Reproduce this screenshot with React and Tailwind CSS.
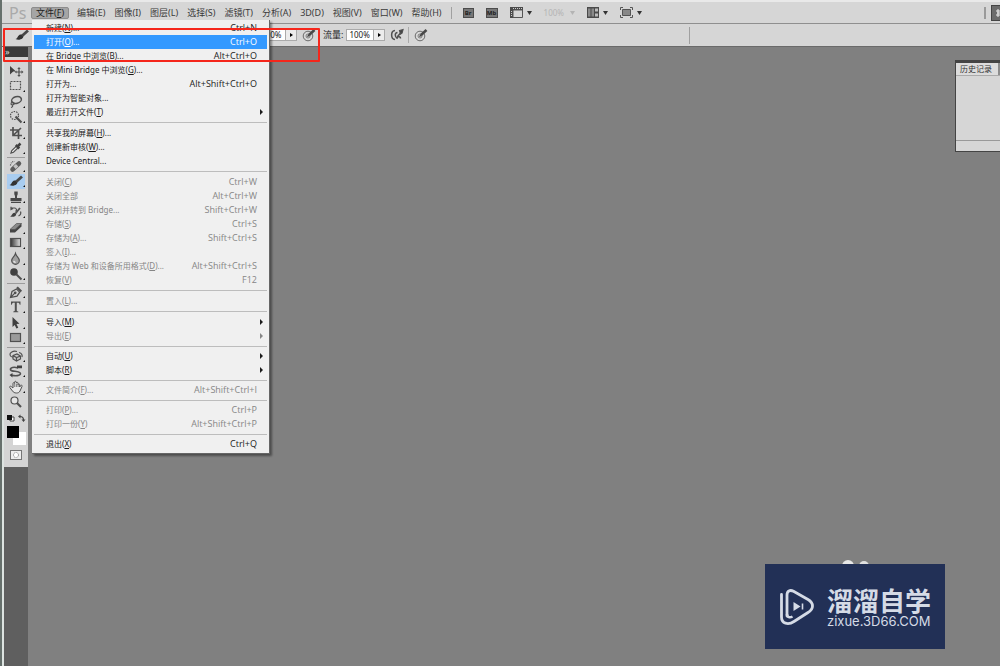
import { createElement } from "react";

const menus = [
  ["编辑", "E"],
  ["图像", "I"],
  ["图层", "L"],
  ["选择", "S"],
  ["滤镜", "T"],
  ["分析", "A"],
  ["3D", "D"],
  ["视图", "V"],
  ["窗口", "W"],
  ["帮助", "H"],
];

// One inner array per block between separators
const fileMenu = [
  [
    { label: "新建", mnemonic: "N", dots: true, keys: "Ctrl+N" },
    { label: "打开", mnemonic: "O", dots: true, keys: "Ctrl+O", active: true },
    { label: "在 Bridge 中浏览", mnemonic: "B", dots: true, keys: "Alt+Ctrl+O" },
    { label: "在 Mini Bridge 中浏览", mnemonic: "G", dots: true },
    { label: "打开为", dots: true, keys: "Alt+Shift+Ctrl+O" },
    { label: "打开为智能对象", dots: true },
    { label: "最近打开文件", mnemonic: "T", submenu: true },
  ],
  [
    { label: "共享我的屏幕", mnemonic: "H", dots: true },
    { label: "创建新审核", mnemonic: "W", dots: true },
    { label: "Device Central", dots: true },
  ],
  [
    { label: "关闭", mnemonic: "C", keys: "Ctrl+W", disabled: true },
    { label: "关闭全部", keys: "Alt+Ctrl+W", disabled: true },
    { label: "关闭并转到 Bridge", dots: true, keys: "Shift+Ctrl+W", disabled: true },
    { label: "存储", mnemonic: "S", keys: "Ctrl+S", disabled: true },
    { label: "存储为", mnemonic: "A", dots: true, keys: "Shift+Ctrl+S", disabled: true },
    { label: "签入", mnemonic: "I", dots: true, disabled: true },
    { label: "存储为 Web 和设备所用格式", mnemonic: "D", dots: true, keys: "Alt+Shift+Ctrl+S", disabled: true },
    { label: "恢复", mnemonic: "V", keys: "F12", disabled: true },
  ],
  [{ label: "置入", mnemonic: "L", dots: true, disabled: true }],
  [
    { label: "导入", mnemonic: "M", submenu: true },
    { label: "导出", mnemonic: "E", submenu: true, disabled: true },
  ],
  [
    { label: "自动", mnemonic: "U", submenu: true },
    { label: "脚本", mnemonic: "R", submenu: true },
  ],
  [{ label: "文件简介", mnemonic: "F", dots: true, keys: "Alt+Shift+Ctrl+I", disabled: true }],
  [
    { label: "打印", mnemonic: "P", dots: true, keys: "Ctrl+P", disabled: true },
    { label: "打印一份", mnemonic: "Y", keys: "Alt+Shift+Ctrl+P", disabled: true },
  ],
  [{ label: "退出", mnemonic: "X", keys: "Ctrl+Q" }],
];

function Svg({ children }) {
  return (
    <svg viewBox="0 0 16 16" className="w-4 h-4" fill="none" stroke="#505050" strokeWidth="1.2" aria-hidden="true">
      {children}
    </svg>
  );
}

const MoveIcon = () => (
  <Svg>
    <path d="M2 3l6 5.500H5.200L2 11.500z" fill="#404040" stroke="none" />
    <path d="M11 6v6M8 9h6" />
    <path d="M11 4l1.700 2H9.300zM11 14l1.700-2H9.300zM15.500 9l-2-1.700v3.400zM6.800 9l1.700-1.500v3z" fill="#505050" stroke="none" />
  </Svg>
);
const MarqueeIcon = () => (
  <Svg>
    <rect x="2.500" y="3.500" width="10" height="8" strokeDasharray="2 1" />
  </Svg>
);
const LassoIcon = () => (
  <Svg>
    <ellipse cx="8.500" cy="6" rx="5" ry="3.300" transform="rotate(-15 8.500 6)" strokeWidth="1.500" />
    <path d="M4.500 8c-2.500 1-1.500 3.500.5 2.800S6 8 4.500 8M4.500 11c.5 1 0 2-1.500 2.500" />
  </Svg>
);
const QuickSelectIcon = () => (
  <Svg>
    <circle cx="6.500" cy="6.500" r="4" strokeDasharray="1.500 1" />
    <path d="M7.500 7.500l6 6" strokeWidth="2.200" />
  </Svg>
);
const CropIcon = () => (
  <Svg>
    <path d="M5 2v8.500h9M2 5h8.500v9M5 10.500L13 3" strokeWidth="1.700" />
  </Svg>
);
const EyedropperIcon = () => (
  <Svg>
    <path d="M3 13l.8-2.500L8.500 6l1.700 1.700-4.700 4.600z" fill="#eee" />
    <path d="M7.800 5l3.500 3.500M9.500 6.500L12.500 3.500" strokeWidth="2.500" stroke="#404040" />
  </Svg>
);
const HealIcon = () => (
  <Svg>
    <path d="M4.500 11.500l6.500-6" strokeWidth="4.500" strokeLinecap="round" stroke="#5c5c5c" />
    <path d="M6.500 9.600l2.600-2.400" strokeWidth="3.500" stroke="#c4c4c4" />
    <path d="M2.500 7.500c0-3 2-4 4-4" strokeDasharray="1 1" />
  </Svg>
);
const BrushIcon = () => (
  <Svg>
    <path d="M1.500 12c2.500-.2 2-4 5-4.500 2.500-.2 3.700 2.200 2 3.700-2 1.800-5 1.800-7 .8z" fill="#333" stroke="none" />
    <path d="M8.200 8.800L14 3.500" strokeWidth="2.800" stroke="#484848" />
  </Svg>
);
const StampIcon = () => (
  <Svg>
    <path d="M6.300 2.500h3.400v2.800L9 7v2h4.500v3h-11V9H7V7l-.7-1.700zM3 12.800h10V14H3z" fill="#484848" stroke="none" />
  </Svg>
);
const HistoryBrushIcon = () => (
  <Svg>
    <path d="M3 4h4.500M3 2.800v2.700l2-1M6.500 4c2.500.3 2.500 2.500 1 3.500" />
    <path d="M2 12.500c2-.3 2-3.500 4.500-3.700 1.800.2 2.300 2 .8 3.200-1.500 1-3.500 1.100-5.300.5z" fill="#404040" stroke="none" />
    <path d="M7.500 9.500L12 4" strokeWidth="1.800" />
    <path d="M10.500 12c2-1 2.700-2.700 2-4.500" />
  </Svg>
);
const EraserIcon = () => (
  <Svg>
    <path d="M2 9.500L8.500 3.500h5L7 9.500z" fill="#8a8a8a" stroke="#5c5c5c" strokeWidth=".8" />
    <path d="M2 9.500h5v3H2zM7 9.500l6.500-6v3L7 12.500z" fill="#444" stroke="none" />
  </Svg>
);
const GradientIcon = () => (
  <Svg>
    <defs>
      <linearGradient id="toolGradient">
        <stop offset="0" stopColor="#333" />
        <stop offset="1" stopColor="#e4e4e4" />
      </linearGradient>
    </defs>
    <rect x="2.500" y="3.500" width="10" height="8" fill="url(#toolGradient)" />
  </Svg>
);
const BlurIcon = () => (
  <Svg>
    <path d="M7.500 2.500c.8 3 3.800 4.300 3.800 7a3.800 3.800 0 0 1-7.600 0c0-2.700 3-4 3.800-7z" fill="#a0a0a0" />
    <path d="M5.700 9.800c.2 1 .9 1.500 1.900 1.500" stroke="#f2f2f2" />
  </Svg>
);
const DodgeIcon = () => (
  <Svg>
    <circle cx="6" cy="6" r="3.800" fill="#404040" stroke="none" />
    <path d="M8.500 8.500l5 5" strokeWidth="2" />
  </Svg>
);
const PenIcon = () => (
  <Svg>
    <path d="M2.500 13.500l1.500-6 4.500-2.500 3.200 3.200-2.700 4zM3 13l3.800-3.800" />
    <path d="M9 3.200l4.300 4.300" strokeWidth="2.200" />
    <circle cx="7.200" cy="8.800" r=".8" fill="#484848" />
  </Svg>
);
const TypeIcon = () => (
  <Svg>
    <path d="M3 2.500h9.500v3.200h-.8c-.3-1.500-.8-2-2-2H8.800v7.600c0 .9.3 1.100 1.500 1.200v.8h-5v-.8c1.200-.1 1.500-.3 1.500-1.200V3.700h-.9c-1.200 0-1.800.5-2.100 2H3z" fill="#505050" stroke="none" />
  </Svg>
);
const PathSelectIcon = () => (
  <Svg>
    <path d="M4.500 2l7 6.800-3 .3 1.800 3.600-1.900.9-1.700-3.700-2.200 2z" fill="#404040" stroke="none" />
  </Svg>
);
const ShapeIcon = () => (
  <Svg>
    <rect x="2.500" y="3.500" width="10" height="8" fill="#9a9a9a" />
  </Svg>
);
const RotateObjectIcon = () => (
  <Svg>
    <path d="M5 7.500l4-1.500 3.500 2v3l-4 2L5 11zM5 7.500l3.500 2 4-1.500M8.500 9.500V13" fill="#c4c4c4" />
    <path d="M9 3.500C5 2.500 1.500 4.500 2 7c.3 1.500 1.500 2 3 2.200M11 4.500c2.500.7 3.500 2.500 3 4.500" />
  </Svg>
);
const RotateCameraIcon = () => (
  <Svg>
    <path d="M10 5C6 3.500 2 4.500 2.500 6.700s7.500 1 9.500 3-2.500 4-8 2.600" strokeWidth="1.600" />
    <path d="M9 2.500h5v2.700H9zM4.500 10v4.500L1.500 12z" fill="#404040" stroke="none" />
  </Svg>
);
const HandIcon = () => (
  <Svg>
    <path d="M5 9V4.500c0-1.200 1.600-1.200 1.600 0V3.200c0-1.200 1.700-1.200 1.700 0v1c0-1.200 1.700-1.200 1.700 0v1.500c0-1.200 1.700-1.200 1.700 0V8l1-1.500c.8-.8 1.800 0 1.300 1l-2 4.500c-.7 1.500-2 2-3.500 2-2 0-3-.7-4-2L1.800 8.500C1.200 7.200 2.600 6.800 3.300 7.600z" fill="#e8e8e8" strokeWidth="1" />
    <path d="M6.700 5v3M8.400 5v3M10.100 5.500V8" strokeWidth=".7" />
  </Svg>
);
const ZoomIcon = () => (
  <Svg>
    <circle cx="6.500" cy="6.500" r="3.500" fill="#e6e6e6" />
    <path d="M9 9l4 4" strokeWidth="2.200" />
  </Svg>
);
const AirbrushIcon = () => (
  <Svg>
    <path d="M6 3.500C1.500 4 1.500 12 6 12.500M8.500 5.500c-3 .3-3 4.500 0 6" strokeWidth="1.500" />
    <path d="M8 11.500l1-2.500 4-4.500M9 9.500c1.500 0 2.500.5 2.500 2" strokeWidth="1.500" />
    <path d="M10.500 3.500L14 2.500l-1 3.500-1.500 1z" fill="#404040" />
  </Svg>
);
const TabletIcon = () => (
  <Svg>
    <circle cx="7" cy="9" r="4.800" strokeWidth="1" stroke="#6a6a6a" />
    <circle cx="7" cy="9" r="2" strokeWidth=".8" stroke="#6a6a6a" />
    <path d="M6 10l1.200-2.800L9 9z" fill="#404040" stroke="none" />
    <path d="M8 8l5.500-5" strokeWidth="2.600" stroke="#484848" />
  </Svg>
);

const toolGroups = [
  {
    height: "h-[93px]",
    tools: [
      ["移动", MoveIcon],
      ["选框", MarqueeIcon],
      ["套索", LassoIcon],
      ["快速选择", QuickSelectIcon],
      ["裁剪", CropIcon],
      ["吸管", EyedropperIcon],
    ],
  },
  {
    height: "h-[125px]",
    tools: [
      ["修复画笔", HealIcon],
      ["画笔", BrushIcon],
      ["图章", StampIcon],
      ["历史记录画笔", HistoryBrushIcon],
      ["橡皮擦", EraserIcon],
      ["渐变", GradientIcon],
      ["模糊", BlurIcon],
      ["减淡", DodgeIcon],
    ],
  },
  {
    height: "h-[63px]",
    tools: [
      ["钢笔", PenIcon],
      ["文字", TypeIcon],
      ["路径选择", PathSelectIcon],
      ["矩形", ShapeIcon],
    ],
  },
  {
    height: "h-[63px]",
    tools: [
      ["3D 对象旋转", RotateObjectIcon],
      ["3D 相机旋转", RotateCameraIcon],
      ["抓手", HandIcon],
      ["缩放", ZoomIcon],
    ],
  },
];

function Caret({ className = "fill-[#333]" }) {
  return (
    <svg viewBox="0 0 5 4" className={`w-[5px] h-1 ${className}`} aria-hidden="true">
      <path d="M0 0h5L2.500 4z" />
    </svg>
  );
}

function MenuBar() {
  return (
    <header className="flex items-center h-6 pl-[2px] bg-[#d6d6d6] border-t-2 border-b border-t-[#e9e9e9] border-b-[#8f8f8f]">
      <span className="w-[27px] pl-[5px] text-[16px] leading-5 text-[#a9a9a9]">Ps</span>
      <nav className="flex items-center gap-[9px] text-[9px] leading-3 text-[#3a3a3a]">
        <button className="h-3 px-1 -mr-px rounded-[2px] bg-[#a5a5a5] border border-[#8c8c8c] leading-[10px] text-[#222]">
          文件(<u>F</u>)
        </button>
        {menus.map(([label, key]) => (
          <button key={key} className="whitespace-nowrap">
            {label}({key})
          </button>
        ))}
      </nav>
      <div className="flex items-center ml-[9px] h-3 pl-[11px] border-l border-[#a0a0a0]">
        <button className="w-[11px] h-[10px] bg-[#777] border border-[#4c4c4c] text-[6px] leading-[8px] font-bold text-[#222]">Br</button>
        <button className="w-3 h-[10px] ml-3 bg-[#777] border border-[#4c4c4c] text-[6px] leading-[8px] font-bold text-[#222]">Mb</button>
        <button className="flex items-center gap-1 ml-3" aria-label="查看额外内容">
          <svg viewBox="0 0 13 11" className="w-[13px] h-[11px]" aria-hidden="true">
            <path d="M0 0h13v3H3v8H0z" fill="#4a4a4a" />
            <path d="M3 3h9.500v7.500H3z" fill="#d6d6d6" stroke="#555" />
            <path d="M3 1.500h9M1.500 4v6" stroke="#ccc" strokeDasharray="1 1" />
          </svg>
          <Caret />
        </button>
        <button className="flex items-center gap-[6px] ml-3 text-[8px] text-[#b4b4b4]">
          100%
          <Caret className="fill-[#b4b4b4]" />
        </button>
        <button className="flex items-center gap-1 ml-3" aria-label="排列文档">
          <svg viewBox="0 0 12 11" className="w-3 h-[11px]" aria-hidden="true">
            <path d="M0 0h12v11H0z" fill="#4a4a4a" />
            <path d="M8 1.500h3v3H8zM8 6.500h3v3H8z" fill="#bdbdbd" />
            <path d="M1 1.500h2.500v8H1zM4.500 1.500h2.500v8H4.500z" fill="#8a8a8a" />
          </svg>
          <Caret />
        </button>
        <button className="flex items-center gap-1 ml-3" aria-label="屏幕模式">
          <svg viewBox="0 0 13 11" className="w-[13px] h-[11px]" aria-hidden="true">
            <path d="M2.500 2.500h8v6h-8z" fill="#888" stroke="#555" />
            <path d="M.5 3V.5H3M10 .5h2.500V3M.5 8v2.500H3M10 10.500h2.500V8" fill="none" stroke="#555" />
          </svg>
          <Caret />
        </button>
      </div>
      <div className="flex items-center gap-[5px] ml-auto">
        <span className="w-[2px] h-3 bg-[#9a9a9a]" />
        <button className="flex items-center justify-end w-[9px] h-4 bg-[#6b6b6b] border border-r-0 border-[#444]" aria-label="基本功能">
          <svg viewBox="0 0 4 8" className="w-1 h-2" aria-hidden="true">
            <path d="M0 2h4M1 4h3M0 6h4M2 0v8" stroke="#eee" />
          </svg>
        </button>
      </div>
    </header>
  );
}

function PercentField({ id, label, name, value }) {
  return (
    <div className="flex items-center gap-[3px]">
      {label && <label htmlFor={id}>{label}:</label>}
      <div className="flex h-3 border border-[#aaa]">
        <input id={id} aria-label={name} defaultValue={value} className="w-[26px] px-[2px] bg-white text-[8px] text-[#222]" />
        <button className="flex items-center justify-center w-[11px] bg-[#ececec] border-l border-[#aaa]" aria-label={`${name}滑块`}>
          <svg viewBox="0 0 3 4" className="w-[3px] h-1 fill-black" aria-hidden="true">
            <path d="M0 0l3 2-3 2z" />
          </svg>
        </button>
      </div>
    </div>
  );
}

function OptionsBar() {
  return (
    <div className="flex items-center h-[23px] pl-3 bg-[#d6d6d6] border-b border-[#6a6a6a] text-[9px] leading-3 text-[#222]">
      <button className="w-[244px]" aria-label="画笔预设">
        <BrushIcon />
      </button>
      <PercentField id="opacity" name="不透明度" value="100%" />
      <button className="ml-1" aria-label="不透明度压力">
        <TabletIcon />
      </button>
      <div className="ml-[6px]">
        <PercentField id="flow" label="流量" name="流量" value="100%" />
      </div>
      <button className="ml-1 mr-[3px]" aria-label="喷枪">
        <AirbrushIcon />
      </button>
      <button className="pl-1 border-l border-[#aaa]" aria-label="大小压力">
        <TabletIcon />
      </button>
      <span className="w-px h-[17px] ml-[260px] bg-[#a0a0a0]" />
    </div>
  );
}

function Toolbox() {
  return (
    <aside className="flex flex-col w-6 bg-[#5f5f5f]">
      <button className="h-[10px] pl-px bg-[#3b3b3b] text-left text-[9px] leading-[8px] text-[#ddd]" aria-label="展开面板">
        »
      </button>
      <div className="pt-[3px] pb-[7px] bg-[#d4d4d4]">
        <div className="h-px mx-1 mb-[2px] bg-[#aaa]" />
        {toolGroups.map(({ height, tools }, i) => (
          <div key={i} className={`flex flex-col mx-[3px] ${height} ${i > 0 ? "mt-px border-t border-[#9c9c9c]" : ""}`}>
            {tools.map(([name, icon]) => (
              <button
                key={name}
                title={name}
                className={`relative flex flex-1 items-center justify-center min-h-0 ${name === "画笔" ? "bg-[#a9cdf0]" : ""}`}
              >
                {createElement(icon)}
                {name !== "移动" && name !== "缩放" && (
                  <svg viewBox="0 0 2 2" className="absolute right-0 bottom-[2px] w-[2px] h-[2px]" aria-hidden="true">
                    <path d="M2 0v2H0z" fill="#111" />
                  </svg>
                )}
              </button>
            ))}
          </div>
        ))}
        {/* Foreground / background colours */}
        <button className="block mx-auto mt-[3px]" aria-label="默认颜色和切换颜色">
          <svg viewBox="0 0 20 10" className="w-5 h-[10px]" aria-hidden="true">
            <path d="M4 4h4v4H4z" fill="#fff" stroke="#444" />
            <path d="M1 2h5v5H1z" fill="#111" />
            <path d="M14 3.500c2.500 0 3.500 1 3.500 3.500" fill="none" stroke="#444" strokeWidth="1.200" />
            <path d="M12 3.500l2.500-2v4zM17.500 9l-2-2.500h4z" fill="#444" />
          </svg>
        </button>
        <button className="block ml-[2px] mt-[2px]" aria-label="前景色和背景色">
          <svg viewBox="0 0 20 20" className="w-5 h-5" aria-hidden="true">
            <path d="M7 7h13v13H7z" fill="#fff" />
            <path d="M1 1h12v12H1z" fill="#000" />
          </svg>
        </button>
        <button className="block mx-auto mt-[5px]" aria-label="快速蒙版">
          <svg viewBox="0 0 12 10" className="w-3 h-[10px]" aria-hidden="true">
            <rect x=".5" y=".5" width="11" height="9" fill="#eee" stroke="#777" />
            <circle cx="6" cy="5" r="2.500" fill="#fff" stroke="#888" strokeDasharray="1 .6" />
          </svg>
        </button>
      </div>
    </aside>
  );
}

function MenuItem({ item }) {
  let color = "text-[#1c1c1c]";
  if (item.disabled) color = "text-[#868686]";
  if (item.active) color = "bg-[#3399ff] text-white";

  return (
    <button
      role="menuitem"
      className={`flex items-center justify-between w-full h-[14px] pl-3 pr-[10px] whitespace-nowrap ${color}`}
    >
      <span>
        {item.label}
        {item.mnemonic && (
          <>
            (<u>{item.mnemonic}</u>)
          </>
        )}
        {item.dots && "..."}
      </span>
      {item.keys && <span className="font-['Open_Sans'] text-[9px]">{item.keys}</span>}
      {item.submenu && (
        <svg viewBox="0 0 3 6" className="w-[3px] h-[6px] -mr-[6px] fill-current" aria-hidden="true">
          <path d="M0 0l3 3-3 3z" />
        </svg>
      )}
    </button>
  );
}

function FileMenu() {
  return (
    <div
      role="menu"
      className="absolute left-[30px] top-5 w-[238px] px-[2px] pt-px pb-[2px] bg-[#f0f0f0] border-r border-b border-[#666] shadow-[2px_2px_2px_rgba(0,0,0,0.4)] text-[8px] leading-[14px]"
    >
      {fileMenu.map((group, i) => (
        <div key={i}>
          {i > 0 && <hr className={`border-[#bdbdbd] mt-[3px] ${i < 5 ? "mb-[3px]" : "mb-[2px]"}`} />}
          {group.map((item) => (
            <MenuItem key={item.label} item={item} />
          ))}
        </div>
      ))}
    </div>
  );
}

function HistoryPanel() {
  return (
    <section className="w-[45px] h-[92px] mt-[13px] ml-auto flex flex-col bg-[#d6d6d6] border-t-[3px] border-l border-b border-[#444]">
      <div className="flex bg-[#8c8c8c] text-[8px] leading-3">
        <h2 className="w-[42px] pl-1 bg-[#dcdcdc] text-[#333] whitespace-nowrap">历史记录</h2>
      </div>
      <div className="flex-1 border-t border-[#aaa]" />
      <div className="h-[11px] border-t border-[#999]" />
    </section>
  );
}

function Watermark() {
  return (
    <div className="absolute right-[55px] bottom-[17px] w-[180px]">
      <div className="absolute left-[77px] -top-1 w-3 h-3 rounded-full bg-[#e8e8e8]" />
      <div className="absolute left-[94px] -top-[3px] w-[10px] h-[10px] rounded-full bg-[#e0e0e0]" />
      <div className="relative flex items-center h-[85px] pl-[14px] gap-3 bg-[#223056] text-[#d5dbe6]">
        <svg viewBox="0 0 36 38" className="w-9 h-[38px] shrink-0" fill="none" stroke="currentColor" aria-hidden="true">
          <path d="M8 28V7c0-4 3-5.500 6.500-3.700L29 11.500c6 3.500 6 9.500 0 13L15 33.500c-6 4-12.500 2-12.500-4.500V6.500" strokeWidth="2.800" strokeLinecap="round" />
          <path d="M8 26c0 3.500 3 4 5.500 2.500" strokeWidth="2.500" />
          <path d="M14.500 14l7 4.500-7 4.500z" fill="currentColor" stroke="none" />
          <path d="M23.500 15.500v6" strokeWidth="1.600" />
        </svg>
        <div className="whitespace-nowrap">
          <p className="text-[26px] leading-[28px] font-bold">溜溜自学</p>
          <p className="font-['Inter'] text-[13px] leading-3">zixue.3D66.COM</p>
        </div>
      </div>
    </div>
  );
}

export default function App() {
  return (
    <div className="relative flex flex-col min-h-screen overflow-hidden bg-[#808080] border-l-2 border-[#66706c] font-['Noto_Sans','Noto_Sans_CJK_SC',sans-serif]">
      <MenuBar />
      <OptionsBar />
      <main className="flex flex-1 items-stretch border-l-2 border-[#dde4e1]">
        <Toolbox />
        <div className="flex-1">
          <HistoryPanel />
        </div>
      </main>
      <FileMenu />
      <div className="absolute left-px top-7 w-[317px] h-[34px] border-2 border-[#f5261b] rounded-[1px] pointer-events-none" />
      <Watermark />
    </div>
  );
}
